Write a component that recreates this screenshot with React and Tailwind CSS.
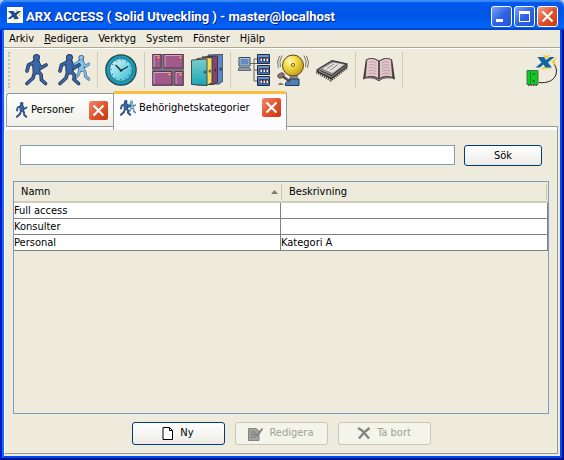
import { useState } from "react";

const RUNNER_LIMBS =
  "M15 8.500L9.500 11L8 17M19 8.500L22 14L27 11M16 17L14 24L8 29.500M18.500 17L22 20.500L22.500 26L26.500 29.500";

const Runner = ({ light }) => (
  <g strokeLinecap="round" strokeLinejoin="round" fill="none">
    <path d={RUNNER_LIMBS} stroke={light ? "#3d6584" : "#26364f"} strokeWidth="3.600" />
    <path d="M17 9L17.500 16.500" stroke={light ? "#3d6584" : "#26364f"} strokeWidth="8" />
    <circle cx="17.500" cy="3.500" r="3.500" fill={light ? "#3d6584" : "#26364f"} />
    <path d={RUNNER_LIMBS} stroke={light ? "#85c3ea" : "#3867ab"} strokeWidth="2" />
    <path d="M17 9L17.500 16.500" stroke={light ? "#85c3ea" : "#3867ab"} strokeWidth="6" />
    <circle cx="17.500" cy="3.500" r="2.600" fill={light ? "#85c3ea" : "#3867ab"} />
  </g>
);

const PersonIcon = ({ className = "size-8" }) => (
  <svg viewBox="0 0 32 32" className={className} aria-hidden="true">
    <Runner />
  </svg>
);

const GroupIcon = ({ className = "size-8" }) => (
  <svg viewBox="0 0 32 32" className={className} aria-hidden="true">
    <g transform="translate(9 1) scale(.82)">
      <Runner light />
    </g>
    <g transform="translate(-6 0)">
      <Runner />
    </g>
  </svg>
);

const ClockIcon = () => (
  <svg viewBox="0 0 32 32" className="size-8" aria-hidden="true">
    <defs>
      <linearGradient id="clockFace" x1="0" y1="0" x2="1" y2="1">
        <stop offset="0" stopColor="#e4fafc" />
        <stop offset=".5" stopColor="#84dbe8" />
        <stop offset="1" stopColor="#35b3cc" />
      </linearGradient>
    </defs>
    <circle cx="16" cy="16" r="15.800" fill="#23424c" />
    <circle cx="16" cy="16" r="14.600" fill="#1c9ab3" />
    <circle cx="16" cy="16" r="11.500" fill="url(#clockFace)" stroke="#0b6177" strokeWidth=".8" />
    <circle cx="16" cy="16" r="9.700" fill="none" stroke="#135a6b" strokeWidth="1.200" strokeDasharray=".8 4.280" />
    <path d="M10.500 11L16 16.500L23 12.500" fill="none" stroke="#172f38" strokeWidth="1.400" />
    <circle cx="16" cy="16.500" r="1.300" fill="#172f38" />
  </svg>
);

const lockers = [
  [1, 0, 9],
  [12, 0, 20],
  [1, 17, 20],
  [23, 17, 9],
];

const LockersIcon = () => (
  <svg viewBox="0 0 32 32" className="size-8" aria-hidden="true">
    <path d="M0 0H32V32H0Z" fill="#77767a" />
    {lockers.map(([x, y, w]) => (
      <g key={`${x}-${y}`}>
        <path d={`M${x} ${y + 0.5}h${w - 1}v13.500h-${w - 1}z`} fill="#a15a8c" stroke="#5b3352" />
        <path d={`M${x + 1} ${y + 13}v-11.500h${w - 3}`} fill="none" stroke="#d6a3c7" />
        <circle cx={x + w - 3.5} cy={y + 3.5} r="1.300" fill="#f5df6c" stroke="#b5283c" strokeWidth=".6" />
      </g>
    ))}
  </svg>
);

const DoorsIcon = () => (
  <svg viewBox="0 0 32 32" className="size-8" aria-hidden="true">
    <defs>
      <linearGradient id="door" x1="0" y1="0" x2="0" y2="1">
        <stop offset="0" stopColor="#7accca" />
        <stop offset="1" stopColor="#1ba6b8" />
      </linearGradient>
    </defs>
    <g stroke="#282d35" strokeWidth=".8">
      <path d="M17 1L32 .5V27L28 30H17Z" fill="#5f88c2" />
      <path d="M11 3L26.500 2V28L22 30.500H11Z" fill="#85456f" />
      <path d="M6 4.500L21 3.500V29L16 31H6Z" fill="#f5da5c" />
      <path d="M.5 6L16 5V31.500L.5 30.500Z" fill="url(#door)" />
    </g>
    <path d="M12.500 18H15M17.500 17H20M23 16H25M28 15H31" stroke="#26323a" />
    <path d="M14 16.500V20M19 15.500V19M24.500 14.500V18M30 13.500V17" stroke="#26323a" strokeWidth=".7" />
  </svg>
);

const NetworkIcon = () => (
  <svg viewBox="0 0 32 32" className="size-8" aria-hidden="true">
    <path d="M12 9.500H20M16 5V27M16 5H20M16 16H20M16 27H20" fill="none" stroke="#66655f" />
    <path d="M1 3.500H12V12H1Z" fill="#b9c4d3" stroke="#34496a" />
    <path d="M2.500 5H10.500V10.500H2.500Z" fill="#6189c4" />
    <path d="M1 13.500H11.500L13 16.500H0Z" fill="#8e99ab" stroke="#3e4a60" strokeWidth=".7" />
    {[0, 11, 22].map((y) => (
      <g key={y}>
        <path d={`M19.500 ${y + 0.5}h12v9h-12z`} fill="#4474b0" stroke="#1c2c44" />
        <path d={`M20 ${y + 2}h11`} stroke="#8fb5df" />
        <path d={`M21.500 ${y + 3}h9v4.500h-9z`} fill="#2d466d" />
        <path d={`M22.500 ${y + 6}h1.500m1.500 0h1.500m1.500 0h1.500`} stroke="#f6f2e8" strokeWidth="2" />
        <path d={`M22.500 ${y + 4.500}h1.500m1.500 0h1.500m1.500 0h1.500`} stroke="#e0604a" />
      </g>
    ))}
  </svg>
);

const BellIcon = () => (
  <svg viewBox="0 0 32 32" className="size-8" aria-hidden="true">
    <defs>
      <radialGradient id="bell" cx=".35" cy=".3" r=".8">
        <stop offset="0" stopColor="#fffab4" />
        <stop offset=".45" stopColor="#f0d43c" />
        <stop offset="1" stopColor="#b8921c" />
      </radialGradient>
    </defs>
    <path
      d="M2.500 2Q-1 8 1.500 14M5 1.500Q1.500 8 3.500 13M29.500 2Q33 8 30.500 14M27 1.500Q30.500 8 28.500 13"
      fill="none"
      stroke="#55544e"
      strokeWidth=".8"
    />
    <path d="M13 20L12 25H21V20" fill="#8c8983" />
    <circle cx="16" cy="11.500" r="10.500" fill="url(#bell)" stroke="#5a4712" />
    <circle cx="16" cy="11" r="1.600" fill="#f6e48e" stroke="#5a4712" strokeWidth=".8" />
    <path d="M13 25H22V31.500H8.500V29Z" fill="#4f7fb8" stroke="#1f3a5c" />
    <path d="M5 22L13 27.500" stroke="#5b4640" strokeWidth="2.500" />
    <ellipse cx="4" cy="21.500" rx="3.500" ry="2.500" transform="rotate(-25 4 21.500)" fill="#8b706b" stroke="#524341" strokeWidth=".7" />
    <path d="M1 31Q3 26.500 7 31Z" fill="#8b706b" />
  </svg>
);

const ChipIcon = () => (
  <svg viewBox="0 0 32 32" className="size-8" aria-hidden="true">
    <path d="M.5 18L15 26L31.500 13" fill="none" stroke="#55534f" strokeWidth="3" strokeDasharray="1.200 1" />
    <path d="M.5 15.500L16 6L31.500 9.500V13L15.500 25.500L.5 18Z" fill="#363636" />
    <path d="M1.500 15.500L16 7L30.500 10L15.500 21.500Z" fill="#8c8c8a" stroke="#333" strokeWidth=".8" />
    <path d="M6.500 14.500L17 8.500L28 10.500L16.500 19Z" fill="#e2e1dc" />
    <path d="M11 14.500L18 10M14.500 16L22 10.500" stroke="#6d6c69" strokeWidth=".8" />
    <path d="M2 16.500L15.500 23L30.500 11.500" fill="none" stroke="#b5b5b2" strokeWidth=".8" />
  </svg>
);

const BookIcon = () => (
  <svg viewBox="0 0 34 32" className="h-8 w-8" aria-hidden="true">
    <path d="M3 5L0 26Q10 23 17 28Q23 23 34 26L31 5Q24 1 17 6Q10 1 3 5Z" fill="#3d3939" />
    <path d="M4 5Q10 2 16.500 6.500V25Q10 21 2.500 24Z" fill="#e5c8cc" stroke="#4c3c40" strokeWidth=".8" />
    <path d="M17.500 6.500Q24 2 30 5L31.500 24Q24 21 17.500 25Z" fill="#e0c5c9" stroke="#4c3c40" strokeWidth=".8" />
    <path
      d="M6.500 8Q10 6 14 8.500M6 11Q10 9 14 11.500M6 14Q10 12 14 14.500M5.500 17Q10 15 14 17.500M5.500 20Q10 18 14 20.500M20 8.500Q24 6 27.500 8M20 11.500Q24 9 28 11M20 14.500Q24 12 28 14M20 17.500Q24 15 28.500 17M20 20.500Q24 18 28.500 20"
      fill="none"
      stroke="#a58d91"
      strokeWidth=".7"
    />
    <path d="M1.500 25.500Q10 22.500 17 26.500Q24 22.500 32 25.500" fill="none" stroke="#c4bfbb" strokeWidth=".7" />
  </svg>
);

const ConnectionLogo = () => (
  <svg viewBox="0 0 32 32" className="size-8" aria-hidden="true">
    <path d="M13 28.500C20 29.500 30.500 27 30.500 17Q30.500 13 28 10" fill="none" stroke="#222" />
    <path
      d="M17 .5L20.500 2L24 .5L21.500 4.500H19ZM14 16L18.500 12.500H21L25 15.500L20 14.500ZM31.500 3L25 8L31 12.500L28.500 8Z"
      fill="#f4cf27"
    />
    <path d="M11.500 3H18L20 6L24 3H28.500L22 8.500L26 13.500H19.500L17.500 10.500L14 13.500H9.500L15.500 8.500Z" fill="#1264a8" />
    <path d="M1 16.500H12V30.500H1Z" fill="#12c824" stroke="#4b6f48" />
    <path d="M4.500 17V30" stroke="#088e18" />
    <path d="M2 31.500H11" stroke="#3b4a3a" strokeDasharray="1.500 1" />
    <path d="M6.500 20H9M6.500 27H9" stroke="#0b8a1a" strokeWidth="2" />
  </svg>
);

const CloseGlyph = () => (
  <svg viewBox="0 0 13 13" className="size-[13px]" aria-hidden="true">
    <path d="M1.500 1.500L11.500 11.500M11.500 1.500L1.500 11.500" stroke="#fff" strokeWidth="2.200" />
  </svg>
);

const toolGroups = [
  [["Personer", PersonIcon], ["Behörighetskategorier", GroupIcon]],
  [["Scheman", ClockIcon]],
  [["Skåp", LockersIcon], ["Dörrar", DoorsIcon]],
  [["Nätverk", NetworkIcon], ["Larm", BellIcon], ["Enheter", ChipIcon]],
  [["Loggbok", BookIcon]],
];

const menus = ["Arkiv", "Redigera", "Verktyg", "System", "Fönster", "Hjälp"];

const categories = [
  { name: "Full access", description: "" },
  { name: "Konsulter", description: "" },
  { name: "Personal", description: "Kategori A" },
];

const TitleBar = () => (
  <header className="flex h-[30px] items-center rounded-t-[6px] bg-linear-to-b from-[#0058ee] via-[#0055e5] via-50% to-[#0066ff] pl-[7px] pr-[6px] shadow-[inset_0_2px_1px_#3b8cf5,inset_0_-2px_1px_#0047cc]">
    <svg viewBox="0 0 16 16" className="size-4 shrink-0" aria-hidden="true">
      <path d="M0 0H16V16H0Z" fill="#fff" />
      <path d="M6 2L8 4L11 1.500L9.500 5ZM6 14L8 11L11 14L8.500 13ZM14.500 4L11 8L14 11L13 8Z" fill="#e9cf35" />
      <path d="M1 4H6.500L8 6L11 4H14L9.500 8L12 12H7.500L6 10L3.500 12H.5L5 8Z" fill="#1b4c8f" />
    </svg>
    <h1 className="ml-[3px] flex-1 whitespace-nowrap pt-[3px] font-[Roboto,sans-serif] text-[13px] font-bold text-white [text-shadow:1px_1px_#0a1f80]">
      ARX ACCESS ( Solid Utveckling ) - master@localhost
    </h1>
    <div className="flex gap-[2px] pt-[3px]">
      <button
        aria-label="Minimera"
        className="flex size-[21px] items-end rounded-[3px] border border-white bg-linear-to-br from-[#7ba2f5] via-[#2f62e2] to-[#2456dc] p-1"
      >
        <span className="h-[3px] w-[7px] bg-white" />
      </button>
      <button
        aria-label="Maximera"
        className="flex size-[21px] items-center justify-center rounded-[3px] border border-white bg-linear-to-br from-[#7ba2f5] via-[#2f62e2] to-[#2456dc]"
      >
        <span className="size-[11px] border border-t-[3px] border-white" />
      </button>
      <button
        aria-label="Stäng"
        className="flex size-[21px] items-center justify-center rounded-[3px] border border-white bg-linear-to-br from-[#f0a088] via-[#e2512b] to-[#c83a12]"
      >
        <CloseGlyph />
      </button>
    </div>
  </header>
);

const MenuBar = () => (
  <nav className="flex h-[18px] items-center gap-[10px] border-b border-[#aca899] pl-[5px]">
    {menus.map((menu) => (
      <button key={menu} className="leading-4">
        {menu === "Redigera" ? (
          <>
            <u>R</u>edigera
          </>
        ) : (
          menu
        )}
      </button>
    ))}
  </nav>
);

const ToolBar = () => (
  <div className="flex h-[42px] items-center gap-[7px] border-t border-white pl-1 pr-[2px]">
    <div className="h-9 w-1 border-l-2 border-dotted border-[#c1beaf]" />
    {toolGroups.map((group, i) => (
      <div key={i} className="flex items-center gap-[7px]">
        {group.map(([label, Icon]) => (
          <button key={label} aria-label={label} className="size-8">
            <Icon />
          </button>
        ))}
        <div className="h-9 w-px bg-[#d0ccb9]" />
      </div>
    ))}
    <div className="ml-auto">
      <ConnectionLogo />
    </div>
  </div>
);

const TabClose = ({ label }) => (
  <button
    aria-label={label}
    className="ml-auto flex size-[19px] items-center justify-center rounded-[2px] bg-linear-to-br from-[#ee8a6d] via-[#e4542e] to-[#c9340b]"
  >
    <CloseGlyph />
  </button>
);

const Tabs = () => (
  <div className="flex items-end pl-px pt-px">
    <div className="bg-white pb-[3px] pl-px">
      <div className="flex h-[34px] w-[107px] items-center rounded-tl-[3px] border border-r-0 border-[#919b9c] bg-linear-to-b from-white to-[#f0f0e8] pl-[6px] pr-[5px]">
        <PersonIcon className="mr-[2px] size-4" />
        <button className="leading-4">Personer</button>
        <TabClose label="Stäng Personer" />
      </div>
    </div>
    <div className="flex h-[39px] w-[174px] items-start rounded-t-[3px] border-x border-t-[3px] border-x-[#919b9c] border-t-[#fcbe3c] bg-[#fcfcfe] pl-[6px] pr-[5px] pt-1">
      <GroupIcon className="mr-[3px] mt-[2px] size-4" />
      <button className="mt-[2px] leading-4">Behörighetskategorier</button>
      <TabClose label="Stäng Behörighetskategorier" />
    </div>
    <div className="mr-[2px] h-1 flex-1 border-r border-t border-[#919b9c] bg-white" />
  </div>
);

const ActionButton = ({ children, disabled }) => (
  <button
    disabled={disabled}
    className="flex h-[23px] w-[93px] items-center justify-center gap-[6px] rounded-[3px] border border-[#003c74] bg-linear-to-b from-white to-[#ecebe6] disabled:border-[#c9c7ba] disabled:bg-[#f5f4ea] disabled:bg-none disabled:text-[#a1a192]"
  >
    {children}
  </button>
);

const CategoryTable = () => (
  <div className="flex-1 border border-[#7f9db9]">
    <table className="w-full table-fixed border-separate border-spacing-0">
      <thead>
        <tr className="h-[21px] bg-[#ebeadb]">
          <th className="border-b-2 border-[#d0ccbc] px-[7px] py-0 text-left font-normal leading-4">
            <div className="flex items-center justify-between">
              Namn
              <svg viewBox="0 0 7 4" className="mr-[-4px] h-1 w-[7px]" aria-hidden="true">
                <path d="M0 4L3.500 0L7 4Z" fill="#7d7c6b" />
              </svg>
            </div>
          </th>
          <th className="border-b-2 border-[#d0ccbc] p-0 text-left font-normal leading-4">
            <div className="mr-px border-x border-[#c7c5b2] pl-[7px]">Beskrivning</div>
          </th>
        </tr>
      </thead>
      <tbody>
        {categories.map((category) => (
          <tr key={category.name} className="h-4 bg-white">
            <td className="border-b border-r border-[#808080] p-0 leading-[15px]">{category.name}</td>
            <td className="border-b border-r border-[#808080] p-0 leading-[15px]">{category.description}</td>
          </tr>
        ))}
      </tbody>
    </table>
  </div>
);

const App = () => {
  const [query, setQuery] = useState("");

  return (
    <div className="flex min-h-screen flex-col bg-[#b9cdf0] font-['DejaVu_Sans_Condensed','Noto_Sans',sans-serif] text-[11px] text-black">
      <TitleBar />
      <div className="flex flex-1 flex-col border-x-2 border-b-2 border-l-[#0019cf] border-r-[#00138c] border-b-[#00138c]">
        <div className="flex flex-1 flex-col border-x-2 border-b-2 border-l-[#166aee] border-r-[#0048f1] border-b-[#0048f1] bg-[#eeeadc]">
          <MenuBar />
          <ToolBar />
          <Tabs />
          <main className="mb-[2px] mr-[2px] flex flex-1 flex-col border-b border-l border-r border-[#919b9c] border-l-white px-2 pb-2">
            <form className="flex gap-[9px] pb-[15px] pl-[7px] pr-[7px] pt-[15px]" onSubmit={(e) => e.preventDefault()}>
              <input
                aria-label="Sök behörighetskategori"
                value={query}
                onChange={(e) => setQuery(e.target.value)}
                className="h-5 min-w-0 flex-1 border border-[#7f9db9] bg-white px-1 outline-none"
              />
              <button className="h-[21px] w-[78px] rounded-[3px] border border-[#003c74] bg-linear-to-b from-white to-[#ecebe6] leading-5">
                Sök
              </button>
            </form>
            <CategoryTable />
            <div className="flex justify-center gap-[10px] pt-2">
              <ActionButton>
                <svg viewBox="0 0 12 14" className="h-[14px] w-3" aria-hidden="true">
                  <path d="M1 .5H7.500L10.500 3.500V12.500H1Z" fill="#fff" stroke="#000" />
                  <path d="M7.500 .5V3.500H10.500" fill="none" stroke="#000" />
                </svg>
                Ny
              </ActionButton>
              <ActionButton disabled>
                <svg viewBox="0 0 15 14" className="h-[14px] w-[15px]" aria-hidden="true">
                  <path d="M.5 1.500H8L11 4V13.500H.5Z" fill="#a3a3a0" stroke="#83837f" />
                  <path d="M2.500 5H7M2.500 7.500H6M2.500 10H8" stroke="#777" />
                  <path d="M6.500 6L9 8.500L14.500 1.500" fill="none" stroke="#858583" strokeWidth="2" />
                </svg>
                Redigera
              </ActionButton>
              <ActionButton disabled>
                <svg viewBox="0 0 14 13" className="h-[13px] w-[14px]" aria-hidden="true">
                  <path d="M1 1L5 3.500L12 11.500M12.500 1L7 5.500L2 11.500" fill="none" stroke="#858583" strokeWidth="2.400" />
                </svg>
                Ta bort
              </ActionButton>
            </div>
          </main>
        </div>
      </div>
    </div>
  );
};

export default App;
